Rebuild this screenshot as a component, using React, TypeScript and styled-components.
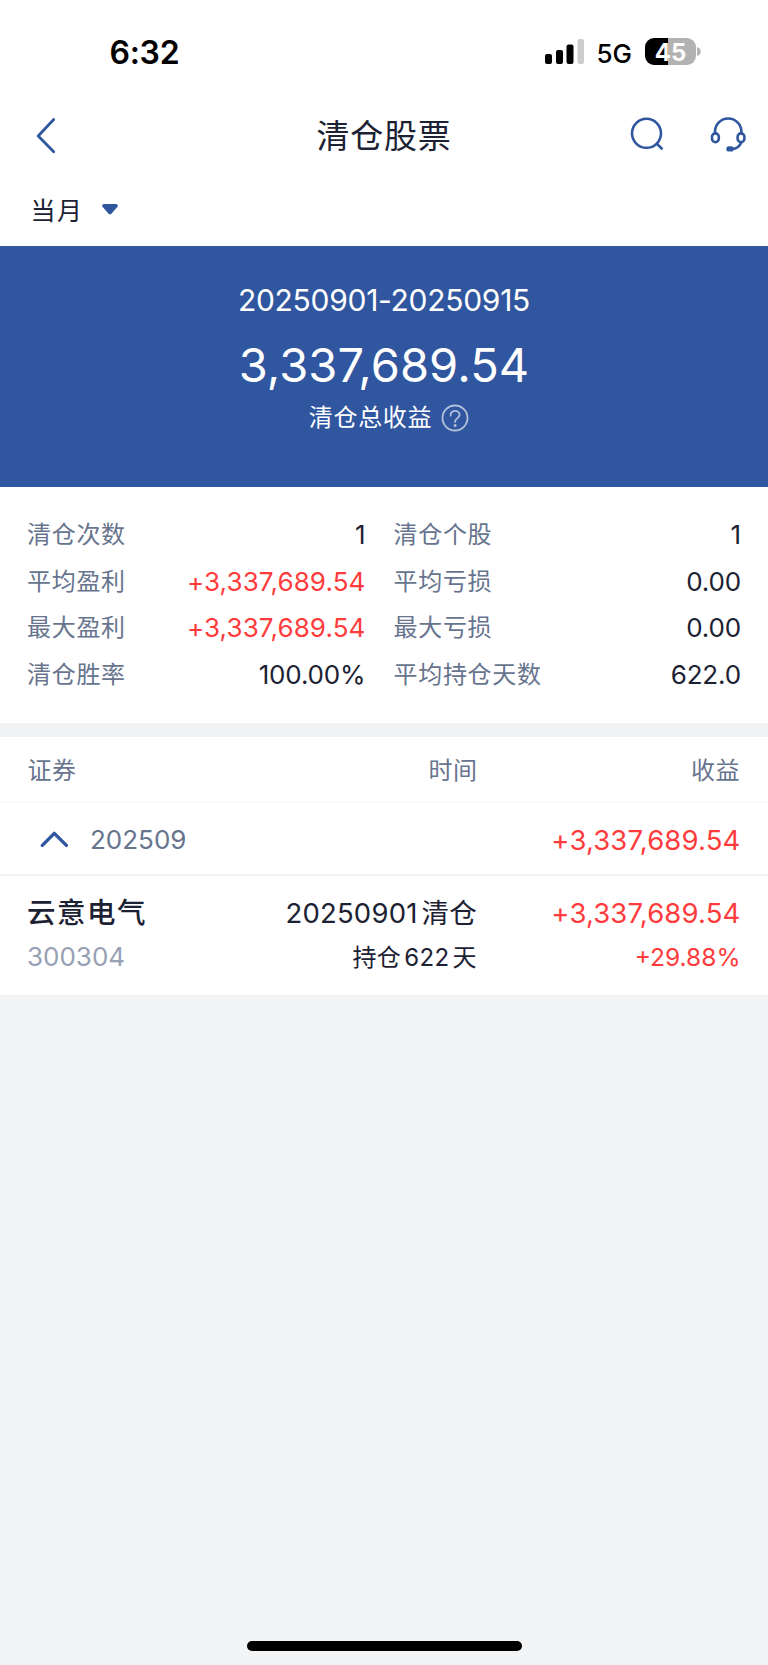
import React from "react";
import styled, { createGlobalStyle } from "styled-components";

const BLUE = "#2f569f";
const INK = "#1c2233";
const MUTED = "#67748e";
const RED = "#ff3b3b";

const Global = createGlobalStyle`
  * { box-sizing: border-box; }
  body { margin: 0; background: #f3f4f6; }
  svg { display: block; overflow: visible; flex: none; }
`;

const Screen = styled.div`
  width: 768px;
  height: 1665px;
  display: flex;
  flex-direction: column;
  background: #f3f4f6;
  color: ${INK};
  font-family: Inter, "Noto Sans CJK SC", sans-serif;

  & > * { flex-shrink: 0; }
`;

const Text = styled.span<{ $size: number; $ls?: number; $color?: string; $weight?: number; $line?: number }>`
  display: block;
  white-space: nowrap;
  font-size: ${(p) => p.$size}px;
  letter-spacing: ${(p) => p.$ls ?? 0}px;
  font-weight: ${(p) => p.$weight ?? 400};
  color: ${(p) => p.$color ?? INK};
  line-height: ${(p) => p.$line ?? 32}px;
`;

const StatusBar = styled.header`
  height: 104px;
  padding: 37px 67px 0 109.5px;
  display: flex;
  align-items: flex-start;
  justify-content: space-between;
  background: #fff;
  color: #000;
`;

const StatusIcons = styled.div`
  display: flex;
  align-items: flex-start;
`;

const Signal = styled.svg`
  margin: -1px 11.5px 0 0;
`;

const Battery = styled.div`
  display: flex;
  align-items: center;
  gap: 1px;
  margin: 1px 0 0 13px;
`;

const BatteryBody = styled.div`
  width: 51px;
  height: 27px;
  border-radius: 9px;
  display: flex;
  justify-content: center;
  background: linear-gradient(to right, #000 23px, #b2b2b2 23px);
`;

const NavBar = styled.nav`
  height: 64px;
  padding: 0 22px;
  display: grid;
  grid-template-columns: 1fr auto 1fr;
  align-items: center;
  background: #fff;
`;

const BackIcon = styled.svg`
  margin-left: 14px;
`;

const NavActions = styled.div`
  display: flex;
  justify-content: flex-end;
  gap: 46px;
`;

const Filter = styled.div`
  height: 78px;
  padding: 26px 0 0 30.5px;
  display: flex;
  align-items: flex-start;
  gap: 18.5px;
  background: #fff;
`;

const Caret = styled.svg`
  margin-top: 10px;
`;

const Summary = styled.section`
  height: 241px;
  padding-top: 38px;
  display: flex;
  flex-direction: column;
  align-items: center;
  gap: 17px;
  background: ${BLUE};
`;

const SummaryLabel = styled.div`
  display: flex;
  align-items: center;
  gap: 8.5px;
  margin: -12px 0 0 9.5px;
`;

const Stats = styled.section`
  height: 236px;
  padding: 25px 27px 0;
  display: grid;
  grid-template-columns: 338.5px 347.5px;
  grid-auto-rows: 46.5px;
  column-gap: 28px;
  align-content: start;
  background: #fff;
`;

const Stat = styled.div`
  display: flex;
  align-items: center;
  justify-content: space-between;
`;

const Divider = styled.div`
  height: 14px;
  background: #f0f2f4;
`;

const TableHead = styled.div`
  height: 66px;
  padding: 3px 28px 0 27.5px;
  display: grid;
  grid-template-columns: 200px 250px 1fr;
  align-items: center;
  justify-items: end;
  background: #fff;
  border-bottom: 1px solid #f6f7f8;

  & > :first-child { justify-self: start; }
`;

const Group = styled.div`
  height: 73px;
  padding: 2px 27.5px 0 41px;
  display: flex;
  align-items: center;
  background: #fff;
  border-bottom: 2px solid #f2f3f5;
`;

const GroupName = styled.div`
  flex: 1;
  display: flex;
  align-items: center;
  gap: 22px;
`;

const Holding = styled.div`
  height: 120px;
  padding: 20.5px 27.5px 0 27px;
  display: grid;
  grid-template-columns: 200px 250px 1fr;
  background: #fff;
  border-bottom: 1px solid #eef0f2;
`;

const Cell = styled.div<{ $end?: boolean; $gap?: number }>`
  display: flex;
  flex-direction: column;
  align-items: ${(p) => (p.$end ? "flex-end" : "flex-start")};
  gap: ${(p) => p.$gap ?? 12.5}px;
`;

const Run = styled.span<{ $before?: number; $after?: number }>`
  margin-left: ${(p) => p.$before ?? 0}px;
  margin-right: ${(p) => p.$after ?? 0}px;
`;

const Footer = styled.footer`
  margin-top: auto;
  height: 24px;
  display: flex;
  justify-content: center;
`;

const HomeIndicator = styled.div`
  width: 275px;
  height: 9.5px;
  border-radius: 5px;
  background: #000;
`;

const stats = [
  ["清仓次数", "1", "清仓个股", "1"],
  ["平均盈利", "+3,337,689.54", "平均亏损", "0.00"],
  ["最大盈利", "+3,337,689.54", "最大亏损", "0.00"],
  ["清仓胜率", "100.00%", "平均持仓天数", "622.0"],
];

function StatItem({ label, value }: { label: string; value: string }) {
  const gain = value.startsWith("+");
  return (
    <Stat>
      <Text $size={24} $ls={0.7} $color={MUTED}>{label}</Text>
      <Text $size={26} $ls={gain ? 0.12 : -0.15} $color={gain ? RED : INK}>{value}</Text>
    </Stat>
  );
}

export default function App() {
  return (
    <Screen>
      <Global />
      <StatusBar>
        <Text $size={32} $weight={600} $ls={-0.3} $color="#000">6:32</Text>
        <StatusIcons>
          <Signal width="40" height="28" viewBox="0 0 40 28">
            <rect x="0" y="18" width="7" height="10" rx="2" />
            <rect x="11" y="14" width="7" height="14" rx="2" />
            <rect x="21.5" y="8.5" width="7" height="19.5" rx="2" />
            <rect x="32.5" y="3" width="6.5" height="25" rx="2" fill="#ccc" />
          </Signal>
          <Text $size={26} $weight={500} $color="#000" $line={34}>5G</Text>
          <Battery>
            <BatteryBody>
              <Text $size={24} $weight={700} $color="#fff" $line={29}>45</Text>
            </BatteryBody>
            <svg width="4" height="9" viewBox="0 0 4 9"><path d="M0 0C5 1.5 5 7.5 0 9Z" fill="#b2b2b2" /></svg>
          </Battery>
        </StatusIcons>
      </StatusBar>
      <NavBar>
        <BackIcon width="20" height="36" viewBox="0 0 20 36" fill="none" stroke={BLUE} strokeWidth="2.8" strokeLinecap="round" strokeLinejoin="round">
          <path d="M17.700 1.500 2.200 18 17.700 33.700" />
        </BackIcon>
        <Text $size={33} $ls={0.8} $line={42}>清仓股票</Text>
        <NavActions>
          <svg width="36" height="36" viewBox="0 0 36 36" fill="none" stroke={BLUE} strokeWidth="2.6" strokeLinecap="round">
            <circle cx="18.500" cy="15.300" r="14.500" />
            <path d="M29 26l4.700 4.500" />
          </svg>
          <svg width="36" height="36" viewBox="0 0 36 36" fill="none" stroke={BLUE} strokeWidth="2.6" strokeLinecap="round">
            <path d="M5 15v-1.300a13.200 13.200 0 0 1 26.400 0V15" />
            <rect x="2" y="15.400" width="6.800" height="8.800" rx="3.400" />
            <rect x="27.600" y="15.400" width="6.800" height="8.800" rx="3.400" />
            <path d="M31.200 24.500C29.700 28.300 26.500 30.800 22 31" />
            <rect x="16.300" y="28.200" width="7.400" height="5.300" rx="2.600" fill={BLUE} stroke="none" />
          </svg>
        </NavActions>
      </NavBar>
      <Filter>
        <Text $size={25} $ls={1.5} $line={34}>当月</Text>
        <Caret width="16" height="11" viewBox="0 0 16 11"><path d="M2 0h12q3 .8 1.300 3L9.400 9.700q-1.400 1.400-2.800 0L.7 3Q-1 .8 2 0Z" fill={BLUE} /></Caret>
      </Filter>
      <Summary>
        <Text $size={30} $ls={-0.28} $color="#fff">20250901-20250915</Text>
        <Text $size={47} $ls={0.1} $color="#fff" $line={64}>3,337,689.54</Text>
        <SummaryLabel>
          <Text $size={24} $ls={0.7} $color="#fff">清仓总收益</Text>
          <svg width="28" height="28" viewBox="0 0 28 28" fill="none" stroke="#b3c1dc" strokeWidth="1.8">
            <circle cx="14" cy="14" r="12.500" />
            <path d="M9.600 11.500c0-6.200 9-5.700 9-.8 0 3.300-4.500 3.600-4.500 7.200" strokeLinecap="round" />
            <circle cx="14.100" cy="21.500" r="1.500" fill="#b3c1dc" stroke="none" />
          </svg>
        </SummaryLabel>
      </Summary>
      <Stats>
        {stats.map(([a, b, c, d]) => (
          <React.Fragment key={a}>
            <StatItem label={a} value={b} />
            <StatItem label={c} value={d} />
          </React.Fragment>
        ))}
      </Stats>
      <Divider />
      <TableHead>
        <Text $size={24} $ls={0.5} $color={MUTED}>证券</Text>
        <Text $size={24} $ls={0.5} $color={MUTED}>时间</Text>
        <Text $size={24} $ls={0.5} $color={MUTED}>收益</Text>
      </TableHead>
      <Group>
        <GroupName>
          <svg width="27" height="18" viewBox="0 0 27 18" fill="none" stroke={BLUE} strokeWidth="3.4" strokeLinecap="round" strokeLinejoin="round">
            <path d="M1.300 14.400 13.300 2.400 25.400 14.400" />
          </svg>
          <Text $size={26} $color={MUTED}>202509</Text>
        </GroupName>
        <Text $size={27.5} $ls={0.15} $color={RED}>+3,337,689.54</Text>
      </Group>
      <Holding>
        <Cell>
          <Text $size={28.5} $weight={500} $ls={1.5}>云意电气</Text>
          <Text $size={26} $color="#98a0b3">300304</Text>
        </Cell>
        <Cell $end $gap={13}>
          <Text $size={27.5} $ls={0.2}>20250901<Run $before={4}>清仓</Run></Text>
          <Text $size={24} $ls={0.4}>持仓<Run $before={3} $after={3}>622</Run>天</Text>
        </Cell>
        <Cell $end>
          <Text $size={27.5} $ls={0.15} $color={RED}>+3,337,689.54</Text>
          <Text $size={24.5} $color={RED}>+29.88%</Text>
        </Cell>
      </Holding>
      <Footer><HomeIndicator /></Footer>
    </Screen>
  );
}
